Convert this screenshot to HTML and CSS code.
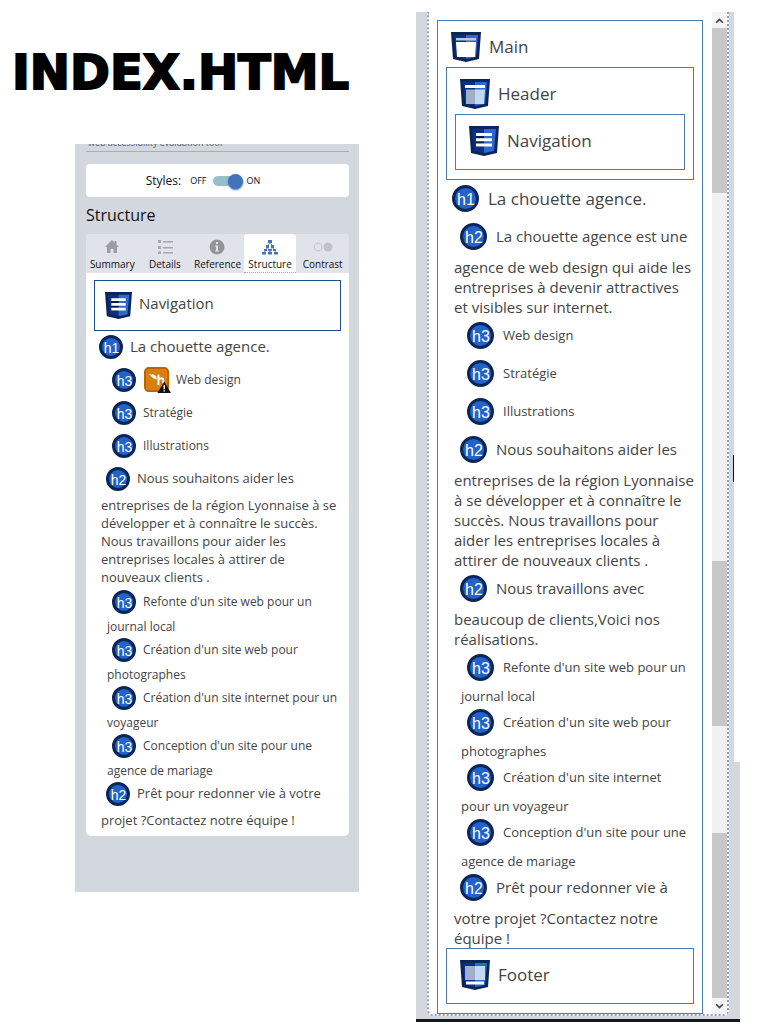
FILE: index.html
```html
<!DOCTYPE html>
<html lang="fr">
<head>
<meta charset="utf-8">
<title>INDEX.HTML</title>
<link rel="stylesheet" href="styles.css">
</head>
<body>
<svg class="defs" aria-hidden="true">
  <symbol id="shield" viewBox="0 0 30 30">
    <path fill="#0a2558" d="M0 0H30L28 27L15 30L2 27Z"/>
    <path fill="#0b2f86" d="M3 3H15V27L5 25Z"/>
    <path fill="#2c68cd" d="M15 3H27L25 25L15 27Z"/>
  </symbol>
  <symbol id="nav" viewBox="0 0 30 30">
    <use href="#shield"/>
    <path fill="#061b48" d="M7 9.500H15V12H7ZM7 14.500H15V17H7ZM7 19.500H15V21H7Z"/>
    <path fill="#fff" d="M7 7H23V10H7ZM7 12.300H23V15.300H7ZM7 17.600H23V20.600H7Z"/>
  </symbol>
  <symbol id="main" viewBox="0 0 30 30">
    <use href="#shield"/>
    <path fill="#b9c9e2" d="M5 6H25V8.500H5Z"/>
    <path fill="#fff" d="M5 10H25L24 25H6Z"/>
  </symbol>
  <symbol id="header" viewBox="0 0 30 30">
    <use href="#shield"/>
    <path fill="#fff" d="M5 6H25V9H5Z"/>
    <path fill="#9eafc9" d="M6 10.500H15V25H6Z"/>
    <path fill="#c4d8f4" d="M15 10.500H25L24 25H15Z"/>
  </symbol>
  <symbol id="footer" viewBox="0 0 30 30">
    <use href="#shield"/>
    <path fill="#9eafc9" d="M5 6H15V20H5Z"/>
    <path fill="#c4d8f4" d="M15 6H25V20H15Z"/>
    <path fill="#fff" d="M6 21.500H24V24.500H6Z"/>
  </symbol>
</svg>

<main class="page">
  <section class="first">
    <h1 class="title">INDEX.HTML</h1>
    <div class="panel">
      <p class="tagline"><span>web accessibility evaluation tool</span></p>
      <div class="styles-box">
        <label for="styles">Styles:</label>
        <span class="state">OFF</span>
        <input class="toggle" id="styles" type="checkbox" role="switch" checked>
        <span class="state">ON</span>
      </div>
      <h2 class="heading">Structure</h2>
      <nav class="tabs">
        <button class="tab" type="button">
          <svg class="tab-icon" viewBox="0 0 16 16" fill="#9a9da1"><path d="M8 1L1 8H3V14H6.500V10H9.500V14H13V8H15L12.500 5.500V2H10.500V3.500Z"/></svg>
          Summary
        </button>
        <button class="tab" type="button">
          <svg class="tab-icon" viewBox="0 0 16 16" fill="#a5a8ac"><path d="M1 1H4V4H1ZM1 7H4V10H1ZM1 12.500H4V15H1ZM6 2H16V3.500H6ZM6 8H16V9.500H6ZM6 13H16V14.500H6Z"/></svg>
          Details
        </button>
        <button class="tab" type="button">
          <svg class="tab-icon" viewBox="0 0 16 16"><circle cx="8" cy="8" r="7.500" fill="#919498"/><path fill="#dfe3ea" d="M7 3H9V5H7ZM6 6.500H9V11.500H10V12.500H6V11.500H7V7.500H6Z"/></svg>
          Reference
        </button>
        <button class="tab tab-on" type="button" aria-current="page">
          <svg class="tab-icon" viewBox="0 0 16 16" fill="#4670b8"><path d="M6 1H10V4H6ZM4 6H7V9H4ZM9 6H12V9H9ZM0 13H4V15.500H0ZM6 13H10V15.500H6ZM12 13H16V15.500H12ZM2 10H5V12H2ZM6.500 10H9.500V12H6.500ZM11 10H14V12H11Z"/><path fill="none" stroke="#4670b8" stroke-width="0.800" d="M8 3L2 14M8 3L14 14M5.500 8L8 14L10.500 8"/></svg>
          Structure
        </button>
        <button class="tab" type="button">
          <svg class="tab-icon wide" viewBox="0 0 20 16"><circle cx="5" cy="8" r="3.800" fill="none" stroke="#c6c9ce" stroke-width="1.200"/><circle cx="15" cy="8" r="4.500" fill="#bfc2c7"/></svg>
          Contrast
        </button>
      </nav>
      <div class="card">
        <div class="region"><div class="region-title"><svg class="shield"><use href="#nav"/></svg>Navigation</div></div>
        <p class="h1"><i class="dot">h1</i>La chouette agence.</p>
        <p class="h3"><i class="dot">h3</i><svg class="skip" viewBox="0 0 28 28"><rect x="1" y="1" width="24" height="24" rx="4" fill="#d97f12" stroke="#b86203" stroke-width="2"/><path fill="#fff" d="M5 7L8 8L9 7L13 10L13 13L10 12L8 10Z"/><path fill="none" stroke="#fff" stroke-width="2" d="M15 8V19M15 14C16 11 20 11 20 14V17"/><path fill="#111" d="M21 15L28 27H14Z"/><path fill="#fff" d="M20.200 19H21.800V23H20.200ZM20.200 24H21.800V25.500H20.200Z"/></svg>Web design</p>
        <p class="h3"><i class="dot">h3</i>Stratégie</p>
        <p class="h3"><i class="dot">h3</i>Illustrations</p>
        <p class="h2"><i class="dot">h2</i>Nous souhaitons aider les entreprises de la région Lyonnaise à se développer et à connaître le succès. Nous travaillons pour aider les entreprises locales à attirer de nouveaux clients .</p>
        <p class="h3"><i class="dot">h3</i>Refonte d'un site web pour un journal local</p>
        <p class="h3"><i class="dot">h3</i>Création d'un site web pour photographes</p>
        <p class="h3"><i class="dot">h3</i>Création d'un site internet pour un voyageur</p>
        <p class="h3"><i class="dot">h3</i>Conception d'un site pour une agence de mariage</p>
        <p class="h2"><i class="dot">h2</i>Prêt pour redonner vie à votre projet ?Contactez notre équipe !</p>
      </div>
    </div>
  </section>

  <section class="second">
    <div class="frame">
      <div class="content">
        <div class="region">
          <div class="region-title"><svg class="shield"><use href="#main"/></svg>Main</div>
          <div class="region">
            <div class="region-title"><svg class="shield"><use href="#header"/></svg>Header</div>
            <div class="region leaf"><div class="region-title"><svg class="shield"><use href="#nav"/></svg>Navigation</div></div>
          </div>
          <p class="h1"><i class="dot">h1</i>La chouette agence.</p>
          <p class="h2"><i class="dot">h2</i>La chouette agence est une agence de web design qui aide les entreprises à devenir attractives et visibles sur internet.</p>
          <p class="h3"><i class="dot">h3</i>Web design</p>
          <p class="h3"><i class="dot">h3</i>Stratégie</p>
          <p class="h3"><i class="dot">h3</i>Illustrations</p>
          <p class="h2"><i class="dot">h2</i>Nous souhaitons aider les entreprises de la région Lyonnaise à se développer et à connaître le succès. Nous travaillons pour aider les entreprises locales à attirer de nouveaux clients .</p>
          <p class="h2"><i class="dot">h2</i>Nous travaillons avec beaucoup de clients,Voici nos réalisations.</p>
          <p class="h3"><i class="dot">h3</i>Refonte d'un site web pour un journal local</p>
          <p class="h3"><i class="dot">h3</i>Création d'un site web pour photographes</p>
          <p class="h3"><i class="dot">h3</i>Création d'un site internet pour un voyageur</p>
          <p class="h3"><i class="dot">h3</i>Conception d'un site pour une agence de mariage</p>
          <p class="h2"><i class="dot">h2</i>Prêt pour redonner vie à votre projet ?Contactez notre équipe !</p>
          <div class="region leaf"><div class="region-title"><svg class="shield"><use href="#footer"/></svg>Footer</div></div>
        </div>
      </div>
      <div class="scroll">
        <button class="arrow" type="button" aria-label="Monter"><svg viewBox="0 0 8 6"><path d="M1 5L4 2L7 5"/></svg></button>
        <span class="thumb"></span>
        <span class="gap-long"></span>
        <span class="thumb"></span>
        <span class="gap-short"></span>
        <span class="thumb"></span>
        <button class="arrow" type="button" aria-label="Descendre"><svg viewBox="0 0 8 6"><path d="M1 1L4 4L7 1"/></svg></button>
      </div>
    </div>
  </section>
</main>
</body>
</html>
```

FILE: styles.css
```css
* { box-sizing: border-box; }

body {
  margin: 0;
  background: #fff;
  color: #444;
  font-family: "Open Sans", "Noto Sans", sans-serif;
}

p, h1, h2 { margin: 0; }

.defs { position: absolute; width: 0; height: 0; }

.page {
  display: grid;
  grid-template-columns: 347fr 324fr;
  gap: 57px;
  align-items: start;
  padding: 12px 29px 6px 12px;
}

.title {
  padding: 30px 0 42px;
  color: #000;
  font: 700 48px/60px "DejaVu Sans", sans-serif;
  -webkit-text-stroke: 2px #000;
}

/* First panel */
.panel {
  margin-left: 63px;
  padding: 0 10px 56px 11px;
  background: #d3d8df;
}

.tagline {
  display: flex;
  align-items: flex-end;
  height: 8px;
  overflow: hidden;
  padding: 0 2px 2px;
  border-bottom: 1px solid #a9aeb6;
  color: #555b63;
  font-size: 9px;
  line-height: 12px;
}

.styles-box {
  display: flex;
  align-items: center;
  justify-content: center;
  gap: 6px;
  height: 33px;
  margin: 12px 0 8px;
  padding-right: 29px;
  border-radius: 4px;
  background: #fff;
  color: #111;
  font-size: 12px;
}

.styles-box label { margin-right: 3px; }
.state { font-size: 9px; }

.toggle {
  appearance: none;
  width: 28px;
  height: 10px;
  margin: 0;
  border-radius: 5px;
  background: #97bfc9;
}

.toggle::before {
  content: "";
  display: block;
  width: 15px;
  height: 15px;
  margin: -2px 0 0 15px;
  border-radius: 50%;
  background: #4272b8;
  box-shadow: 0 1px 2px #4272b8;
}

.heading {
  color: #111;
  font-size: 16px;
  font-weight: 400;
  line-height: 20px;
}

.tabs {
  display: grid;
  grid-template-columns: repeat(5, 1fr);
  margin-top: 9px;
  border-radius: 4px 4px 0 0;
  background: #e0e3e9;
}

.tab {
  display: flex;
  flex-direction: column;
  align-items: center;
  gap: 2px;
  min-width: 0;
  padding: 5px 0 0;
  border: 0;
  border-bottom: 1px solid transparent;
  background: none;
  color: #111;
  font: 10px/15px "Open Sans", sans-serif;
}

.tab-on {
  border-bottom: 1px dotted #8fa3c4;
  border-radius: 4px 4px 0 0;
  background: #fff;
}

.tab-icon { width: 16px; height: 16px; }
.tab-icon.wide { width: 20px; }

.card {
  padding: 7px 8px;
  border-radius: 0 0 5px 5px;
  background: #fff;
}

/* Outline items */
.region { border: 1px solid #4a7eaa; }
.card .region { border-color: #1d4f86; }

.region-title { display: flex; font-size: 15px; line-height: 22px; }
.card .region-title { gap: 7px; padding: 11px 10px; }
.card .shield { width: 27px; height: 27px; }

.card .h1, .card .h2, .card .h3 { --size: 24px; --below: 5px; --left: 5px; --right: 7px; }
.card .h1 { font-size: 15px; line-height: 18px; }
.card .h2 { padding-left: 7px; font-size: 13px; line-height: 18px; }
.card .h3 { padding-left: 13px; font-size: 12px; line-height: 15px; }

.dot {
  display: inline-block;
  width: var(--size);
  height: var(--size);
  margin: 4px var(--right) var(--below) var(--left);
  padding-left: 1px;
  border: 3px solid #0a2558;
  border-radius: 50%;
  background: #2263c9;
  color: #fff;
  font: 14px/20px "Liberation Sans", sans-serif;
  text-align: center;
  vertical-align: middle;
}

.skip { width: 27px; height: 27px; margin: 3px 5px 3px 1px; vertical-align: middle; }

/* Second panel */
.second {
  padding: 0 11px 3px;
  border-bottom: 3px solid #16181c;
  background:
    linear-gradient(#111, #111) right 6px top 443px / 1px 27px no-repeat,
    linear-gradient(#fff, #fff) right top / 6px 750px no-repeat,
    #d3d8df;
}

.frame {
  display: flex;
  border: 2px dotted #86a0c6;
  border-top: 0;
  border-radius: 0 0 6px 6px;
  background: #fff;
}

.content { flex: 1; padding: 8px 9px 0 8px; }

.second .region { padding: 0 8px 9px; }
.second .leaf { padding-bottom: 8px; }
.second .region-title { gap: 8px; padding: 11px 5px 5px; font-size: 17px; line-height: 29px; }
.second .shield { width: 30px; height: 30px; }

.second .h1, .second .h2, .second .h3 { --size: 27px; --below: 7px; --left: 6px; --right: 9px; }
.second .h1 { padding-top: 1px; font-size: 17px; line-height: 20px; }
.second .h2 { padding-left: 8px; font-size: 15px; line-height: 20px; }
.second .h3 { padding: 0 4px 0 15px; font-size: 13px; line-height: 17px; }
.second .h2 + p { margin-top: 1px; }
.second .dot { font-size: 16px; line-height: 23px; }

.scroll {
  display: flex;
  flex-direction: column;
  width: 15px;
  background: #f1f1f1;
}

.arrow {
  display: grid;
  place-items: center;
  height: 16px;
  padding: 0;
  border: 0;
  background: #f4f4f4;
}

.arrow svg { width: 9px; height: 7px; fill: none; stroke: #444; stroke-width: 1.500; }
.thumb { flex: 165; background: #c8c8c8; }
.gap-long { flex: 369; }
.gap-short { flex: 107; }
```
